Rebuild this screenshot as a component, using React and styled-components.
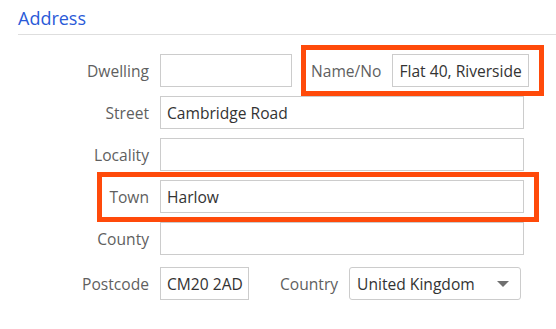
import React from 'react'
import styled, { createGlobalStyle } from 'styled-components'

const GlobalStyle = createGlobalStyle`
    body {
        margin: 0;
        background: #ffffff;
        font-family: "Open Sans", "Noto Sans", sans-serif;
    }
`

const Container = styled.div`
    width: 556px;
    height: 329px;
    overflow: hidden;
    padding: 6px 0 0 18px;
    box-sizing: border-box;
`
const Title = styled.h2`
    margin: 0;
    font-size: 18px;
    font-weight: 400;
    color: #2a5ad8;
    line-height: 24px;
    padding-bottom: 4px;
    border-bottom: 1px solid #dedede;
`
const Form = styled.div`
    display: flex;
    flex-direction: column;
    gap: 9px;
    padding: 19px 32px 0 0;
`
const Row = styled.div`
    position: relative;
    display: flex;
    align-items: center;
    gap: 11px;
    margin-top: ${p => p.$top || 0}px;
`
const Label = styled.label`
    width: ${p => p.$width ? p.$width + 'px' : 'auto'};
    margin-left: ${p => p.$offset || 0}px;
    text-align: right;
    font-size: 15.6px;
    color: #5f5f5f;
    flex-shrink: 0;
`
const Input = styled.div`
    height: 33px;
    box-sizing: border-box;
    border: 1px solid #cccccc;
    padding: 0 6px;
    display: flex;
    align-items: center;
    font-size: 15.6px;
    color: #333333;
    white-space: nowrap;
    overflow: hidden;
    width: ${p => p.$width ? p.$width + 'px' : 'auto'};
    flex: ${p => p.$width ? '0 0 auto' : '1 1 auto'};
`
const Select = styled(Input)`
    border-radius: 3px;
    justify-content: space-between;
    padding: 0 11px 0 7px;
`
const Arrow = styled.span`
    width: 0;
    height: 0;
    border-left: 6px solid transparent;
    border-right: 6px solid transparent;
    border-top: 6px solid #707070;
`
const Group = styled.div`
    position: relative;
    display: flex;
    align-items: center;
    gap: 11px;
    flex: 1 1 auto;
`
const Highlight = styled.div`
    position: absolute;
    left: ${p => p.$l}px;
    right: ${p => p.$r}px;
    top: ${p => p.$t}px;
    bottom: ${p => p.$b}px;
    border: 5px solid #ff4a0a;
    pointer-events: none;
`

export default function App() {
    return (
        <Container>
            <GlobalStyle />
            <Title>Address</Title>
            <Form>
                <Row>
                    <Label $width={131}>Dwelling</Label>
                    <Input $width={132} />
                    <Group>
                        <Label $offset={8}>Name/No</Label>
                        <Input>Flat 40, Riverside</Input>
                        <Highlight $l={-2} $r={-15} $t={-9} $b={-9} />
                    </Group>
                </Row>
                <Row>
                    <Label $width={131}>Street</Label>
                    <Input>Cambridge Road</Input>
                </Row>
                <Row>
                    <Label $width={131}>Locality</Label>
                    <Input />
                </Row>
                <Row>
                    <Label $width={131}>Town</Label>
                    <Input>Harlow</Input>
                    <Highlight $l={79} $r={-15} $t={-8} $b={-9} />
                </Row>
                <Row>
                    <Label $width={131}>County</Label>
                    <Input />
                </Row>
                <Row $top={3}>
                    <Label $width={131}>Postcode</Label>
                    <Input $width={89}>CM20 2AD</Input>
                    <Label $offset={20}>Country</Label>
                    <Select $width={172}>
                        United Kingdom
                        <Arrow />
                    </Select>
                </Row>
            </Form>
        </Container>
    )
}
